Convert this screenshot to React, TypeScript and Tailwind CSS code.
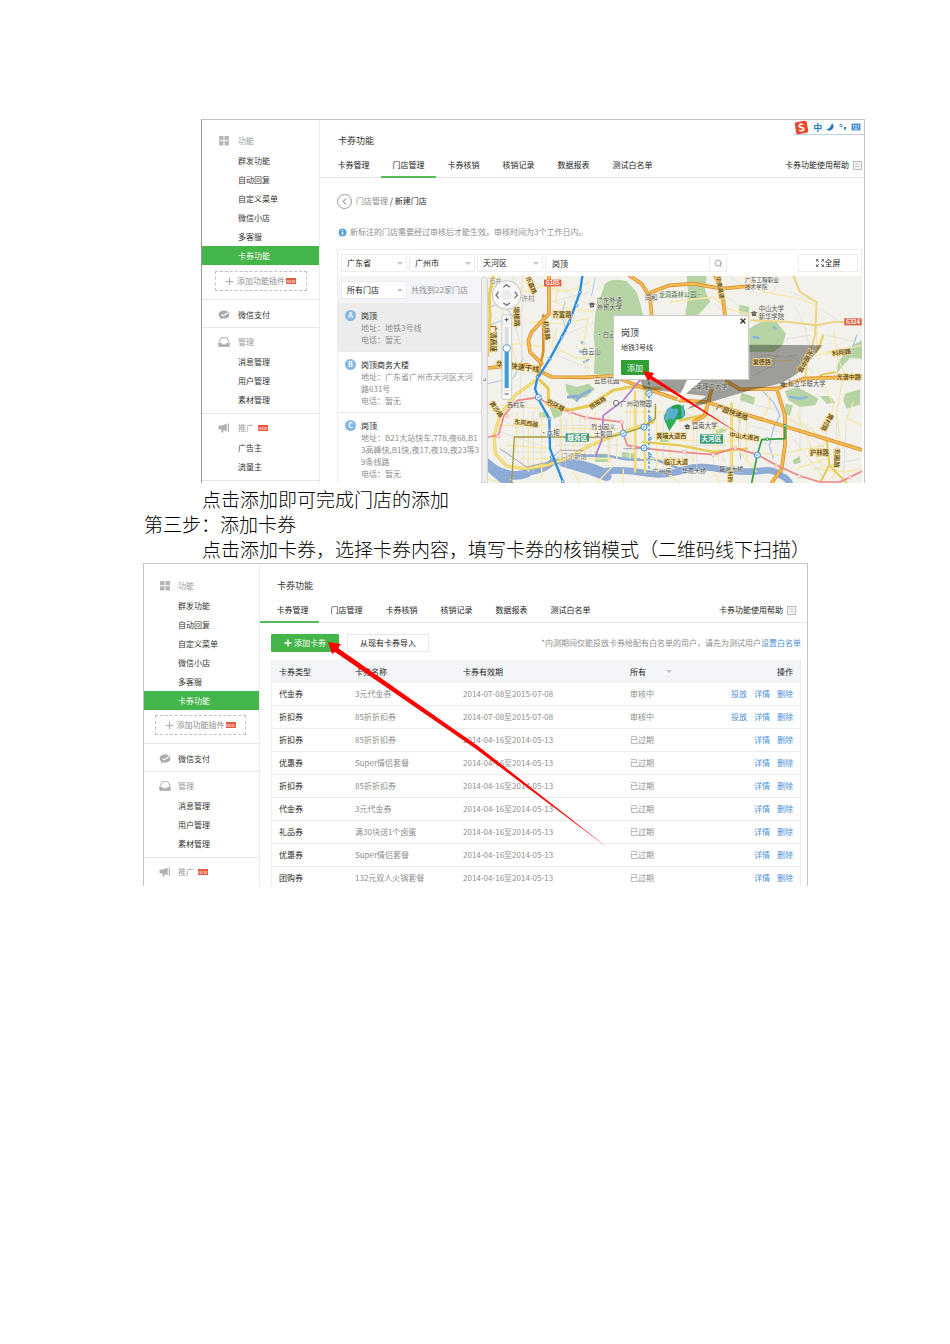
import React from 'react';
import { ChevronLeft, Info, Search, X } from 'lucide-react';

interface Store {
  mark: string;
  name: string;
  lines: string[];
}

interface Coupon {
  type: string;
  name: string;
  period: string;
  status: string;
  canRelease?: boolean;
}

interface MapLabel {
  text: string;
  x: number;
  y: number;
  size?: number;
  rotate?: number;
  color?: string;
  road?: boolean;
}

const tabs = ['卡券管理', '门店管理', '卡券核销', '核销记录', '数据报表', '测试白名单'];

const featureItems = ['群发功能', '自动回复', '自定义菜单', '微信小店', '多客服', '卡券功能'];

const stores: Store[] = [
  { mark: 'A', name: '岗顶', lines: ['地址：地铁3号线', '电话：暂无'] },
  { mark: 'B', name: '岗顶商务大楼', lines: ['地址：广东省广州市天河区天河', '路631号', '电话：暂无'] },
  {
    mark: 'C',
    name: '岗顶',
    lines: ['地址：B21大站快车,778,夜68,B1', '3高峰快,B1快,夜17,夜19,夜23等3', '9条线路', '电话：暂无'],
  },
];

const coupons: Coupon[] = [
  { type: '代金券', name: '3元代金券', period: '2014-07-08至2015-07-08', status: '审核中', canRelease: true },
  { type: '折扣券', name: '85折折扣券', period: '2014-07-08至2015-07-08', status: '审核中', canRelease: true },
  { type: '折扣券', name: '85折折扣券', period: '2014-04-16至2014-05-13', status: '已过期' },
  { type: '优惠券', name: 'Super情侣套餐', period: '2014-04-16至2014-05-13', status: '已过期' },
  { type: '折扣券', name: '85折折扣券', period: '2014-04-16至2014-05-13', status: '已过期' },
  { type: '代金券', name: '3元代金券', period: '2014-04-16至2014-05-13', status: '已过期' },
  { type: '礼品券', name: '满30块送1个卤蛋', period: '2014-04-16至2014-05-13', status: '已过期' },
  { type: '优惠券', name: 'Super情侣套餐', period: '2014-04-16至2014-05-13', status: '已过期' },
  { type: '团购券', name: '132元双人火锅套餐', period: '2014-04-16至2014-05-13', status: '已过期' },
];

const mapLabels: MapLabel[] = [
  { text: '石井', x: 46, y: 32, size: 18, color: '#888' },
  { text: '乐嘉路', x: 148, y: 42, size: 18, rotate: 68, road: true },
  { text: '许村', x: 144, y: 86, size: 20, color: '#888' },
  { text: '增槎路', x: 103, y: 134, size: 20, rotate: 88, road: true },
  { text: '广清高速', x: 34, y: 200, size: 20, rotate: 90, road: true },
  { text: '齐富路', x: 246, y: 136, size: 19, road: true },
  { text: '机场路', x: 193, y: 176, size: 19, rotate: 84, road: true },
  { text: '广东外语', x: 388, y: 92, size: 19 },
  { text: '外贸大学', x: 388, y: 114, size: 19 },
  { text: '•白云', x: 378, y: 194, size: 19 },
  { text: '白云山', x: 334, y: 246, size: 19 },
  { text: '同和', x: 514, y: 84, size: 19 },
  { text: '龙洞森林公园•', x: 602, y: 76, size: 19, color: '#4b7547' },
  { text: '广东工程职业', x: 846, y: 30, size: 17 },
  { text: '技术学院', x: 828, y: 50, size: 17 },
  { text: '中山大学', x: 874, y: 118, size: 19 },
  { text: '新华学院', x: 874, y: 140, size: 19 },
  { text: '华南高速', x: 714, y: 48, size: 17, rotate: 80, road: true },
  { text: '华南快速干线', x: 112, y: 292, size: 22, rotate: 8, road: true },
  { text: '云台花园', x: 380, y: 334, size: 19 },
  { text: '西村东', x: 108, y: 404, size: 18 },
  { text: '内环路', x: 224, y: 406, size: 19, rotate: 28, road: true },
  { text: '恒福路', x: 356, y: 398, size: 18, rotate: -32, road: true },
  { text: '广州动物园', x: 468, y: 402, size: 19 },
  { text: '东风西路', x: 138, y: 460, size: 18, rotate: 8, road: true },
  { text: '黄沙路', x: 44, y: 416, size: 18, rotate: 55, road: true },
  { text: '•六榕', x: 210, y: 490, size: 19 },
  { text: '烈士起义', x: 370, y: 470, size: 18 },
  { text: '士陵园', x: 370, y: 492, size: 18 },
  { text: '门诊新馆', x: 282, y: 560, size: 19, color: '#888' },
  { text: '黄埔大道西', x: 574, y: 498, size: 18, road: true },
  { text: '临江大道', x: 588, y: 576, size: 18, road: true },
  { text: '•广州塔', x: 536, y: 606, size: 19 },
  { text: '华南理工大学', x: 686, y: 352, size: 19 },
  { text: '暨南大学', x: 674, y: 469, size: 19 },
  { text: '广园快速路', x: 754, y: 428, size: 20, rotate: 20, road: true },
  { text: '中山大道西', x: 792, y: 500, size: 18, rotate: 8, road: true },
  { text: '华南大桥', x: 642, y: 602, size: 18 },
  { text: '琶洲大桥', x: 753, y: 597, size: 18 },
  { text: '科韵', x: 745, y: 614, size: 16, rotate: 88, road: true },
  { text: '棠德路', x: 845, y: 275, size: 18, road: true },
  { text: '大观中路', x: 970, y: 264, size: 19, rotate: 118, road: true },
  { text: '科翔路', x: 1086, y: 248, size: 19, rotate: -8, road: true },
  { text: '光谱中路', x: 1106, y: 320, size: 18, road: true },
  { text: '私立华联大学', x: 980, y: 341, size: 19 },
  { text: '黄村路', x: 1036, y: 448, size: 19, rotate: 118, road: true },
  { text: '护林路', x: 1018, y: 548, size: 19, road: true },
  { text: '东圃路', x: 1064, y: 558, size: 19, rotate: 92, road: true },
];

const GridIcon = () => (
  <svg viewBox="0 0 10 10" className="w-[10px] h-[10px]" fill="#b5b5b5">
    <rect x="0" y="0" width="4.5" height="4.2" />
    <rect x="5.5" y="0" width="4.5" height="4.2" />
    <rect x="0" y="5.2" width="4.5" height="4.2" />
    <rect x="5.5" y="5.2" width="4.5" height="4.2" />
  </svg>
);

const PayIcon = () => (
  <svg viewBox="0 0 12 10" className="w-3 h-[10px]">
    <path d="M6 .5C9 .5 11.4 2.2 11.4 4.5S9 8.600 6 8.600c-.7 0-1.300-.1-1.900-.25L2 9.500l.4-1.900C1.200 6.900.6 5.800.6 4.500.6 2.200 3 .5 6 .5z" fill="#a9a9a9" />
    <path d="M3.200 4.300l1.800 1.500 5.200-3" fill="none" stroke="#fff" strokeWidth="1.100" />
  </svg>
);

const TrayIcon = () => (
  <svg viewBox="0 0 12 10" className="w-3 h-[10px]">
    <path d="M3 .7h6l2.200 5.300v3.300H.8V6z" fill="#fff" stroke="#b0b0b0" strokeWidth="1" />
    <path d="M.8 6h2.700l.8 1.300h3.400L8.500 6h2.700v3.300H.8z" fill="#b0b0b0" />
  </svg>
);

const HornIcon = () => (
  <svg viewBox="0 0 12 10" className="w-3 h-[10px]" fill="#b0b0b0">
    <path d="M.5 3.200Q.5 2.500 1.500 2.500H4L8.700.8v7.400L5.500 7v2.500H3.500V6.500h-2Q.5 6.500.5 5.500z" />
    <path d="M9.800.5h1.200v8.500H9.800z" />
  </svg>
);

const NewBadge = () => (
  <span className="flex h-[6px] w-[10px] items-center justify-center bg-[#e8583c] text-[4px] leading-none text-white">NEW</span>
);

const Caret = () => <span className="border-x-[3px] border-t-[3px] border-x-transparent border-t-[#c4c4c4]" />;

interface SidebarProps {
  compact?: boolean;
}

const Sidebar: React.FC<SidebarProps> = ({ compact }) => {
  const headClass = `flex h-5 items-center text-[#999] ${compact ? 'gap-[7px] pl-[15px]' : 'gap-2 pl-4'}`;
  const itemClass = `flex h-[19px] items-center ${compact ? 'pl-[34px]' : 'pl-9'}`;

  return (
    <nav
      className={`shrink-0 border-r border-[#ebebeb] text-[#333] ${compact ? 'w-[116px] pt-3' : 'w-[118px] pt-[11px]'}`}
    >
      <div className={headClass}>
        <span className="flex w-3 justify-center">
          <GridIcon />
        </span>
        功能
      </div>
      {featureItems.map((item) => (
        <a
          key={item}
          href="#"
          className={`${itemClass} ${item === '卡券功能' ? 'bg-[#44b549] text-white' : ''}`}
        >
          {item}
        </a>
      ))}
      <button
        className={`flex h-5 items-center justify-center gap-1 border border-dashed border-[#c0c0c0] text-[#8d8d8d] ${
          compact ? 'mt-[5px] mb-2 ml-[11px] w-[91px]' : 'mt-[6px] mb-2 ml-[13px] w-[92px]'
        }`}
      >
        <svg viewBox="0 0 7 7" className="h-[7px] w-[7px]" stroke="#aaa">
          <path d="M3.500 0v7M0 3.500h7" />
        </svg>
        <span className="flex items-center gap-px">
          添加功能插件
          <NewBadge />
        </span>
      </button>

      <div className="border-t border-[#e7e7eb] pt-[5px] pb-[2px]">
        <a href="#" className={`${headClass} text-[#333]!`}>
          <PayIcon />
          微信支付
        </a>
      </div>
      <div className="border-t border-[#e7e7eb] py-1">
        <div className={headClass}>
          <TrayIcon />
          管理
        </div>
        {['消息管理', '用户管理', '素材管理'].map((item) => (
          <a key={item} href="#" className={itemClass}>
            {item}
          </a>
        ))}
      </div>
      <div className="border-t border-[#e7e7eb] py-1">
        <div className={headClass}>
          <HornIcon />
          <span className="flex items-center gap-1">
            推广
            <NewBadge />
          </span>
        </div>
        {!compact &&
          ['广告主', '流量主'].map((item) => (
            <a key={item} href="#" className={itemClass}>
              {item}
            </a>
          ))}
      </div>
      {!compact && <div className="border-t border-[#e7e7eb]" />}
    </nav>
  );
};

interface HeaderProps {
  active: string;
  compact?: boolean;
}

const Header: React.FC<HeaderProps> = ({ active, compact }) => (
  <header className={compact ? 'pt-[15px]' : 'pt-[14px]'}>
    <h1 className={`text-[9px] leading-[14px] text-[#333] ${compact ? 'pl-[17px]' : 'pl-[18px]'}`}>卡券功能</h1>
    <div className={`flex h-[30px] items-end border-b border-[#e7e7eb] ${compact ? 'pr-[11px]' : 'pl-[6px] pr-[2px]'}`}>
      {tabs.map((tab, i) => (
        <a
          key={tab}
          href="#"
          className={`-mb-px flex h-[25px] shrink-0 justify-center border-b-2 text-[#222] ${
            tab === active ? 'border-[#56b95a]' : 'border-transparent'
          } ${compact && i === 0 ? 'w-[59px] pl-[6px]' : i === 5 ? 'w-[63px]' : 'w-[55px]'}`}
        >
          <span className="pt-[6px] leading-3">{tab}</span>
        </a>
      ))}
      <a href="#" className="mb-[6px] ml-auto flex items-center gap-1 leading-3 text-[#222]">
        卡券功能使用帮助
        <svg viewBox="0 0 9 9" className="h-[9px] w-[9px]" fill="#f4f4f4" stroke="#bbb">
          <rect x=".5" y=".5" width="8" height="8" />
          <path d="M2.500 3h4M2.500 5.500h4" strokeWidth=".8" />
        </svg>
      </a>
    </div>
  </header>
);

interface FilterSelectProps {
  label: string;
  value: string;
}

const FilterSelect: React.FC<FilterSelectProps> = ({ label, value }) => (
  <div className="relative w-[66px] shrink-0">
    <select
      aria-label={label}
      className="block h-[18px] w-full appearance-none border border-[#ececf0] bg-white pl-[5px] text-[8px] text-[#222]"
    >
      <option>{value}</option>
    </select>
    <span className="pointer-events-none absolute right-1 top-2 flex">
      <Caret />
    </span>
  </div>
);

const roadLabelColor = '#5a4310';

/* City map: parks, water, roads, metro lines, then labels and controls */
const CityMap = () => (
  <svg viewBox="24 12 1122 621" preserveAspectRatio="xMinYMin slice" className="absolute inset-0 h-full w-full">
    <rect x="0" y="0" width="1600" height="900" fill="#f3f1ec" />

    <g fill="#b6d4a3">
      <path d="M375 35Q400 15 440 28L470 60 485 110 492 140V300L440 322 342 305 345 230 341 190 346 120Z" />
      <path d="M620 12H680L675 55 690 90 655 128 615 135 625 70Z" />
      <path d="M808 170Q850 138 890 150L918 185 908 218 880 240H808Z" />
      <path d="M778 98L808 105 806 128 778 124Z" />
      <path d="M1110 225L1146 205V260L1110 258 1085 285 1070 305 1074 270Z" />
      <path d="M915 358L950 345 985 362 1016 380 1005 400 960 405 925 385Z" />
      <path d="M1020 372L1050 372 1065 392 1040 395Z" />
      <path d="M1095 365L1140 352V398L1100 410 1090 385Z" />
      <path d="M915 395L938 400 930 432 915 425Z" />
      <path d="M938 565L960 552 962 572 942 577Z" />
      <path d="M256 335L290 345 325 335 345 350 320 375 280 385 260 360Z" />
      <path d="M208 405L245 402 246 430 222 440Z" />
      <path d="M784 362L825 376 822 398 780 385Z" />
      <path d="M705 478L730 465 742 475 712 488Z" />
      <path d="M345 545H385V570H345Z" />
      <path d="M178 420H205V436H178Z" />
      <path d="M425 540L470 545 465 560H425Z" />
      <path d="M540 480H565V510H540Z" />
    </g>

    <g fill="none" stroke="#8dabd6" strokeLinecap="round" strokeLinejoin="round">
      <path d="M20 572Q48 600 80 606 110 615 140 604" strokeWidth="26" />
      <path d="M30 588L90 640" strokeWidth="26" />
      <path d="M140 602Q185 595 205 580 220 565 240 567 300 566 370 598 430 590 500 604 550 612 600 598 640 580 700 588 780 604 850 596 880 590 905 612 925 620 930 636" strokeWidth="20" />
      <path d="M250 570L320 590 380 612" strokeWidth="30" />
      <path d="M280 552Q330 550 390 552 440 568 520 560L600 590" strokeWidth="8" />
      <path d="M30 105Q60 90 80 108L110 150M24 160L90 138 120 110M24 335L100 318 130 260" strokeWidth="3" stroke="#a8c5e6" />
      <path d="M850 358L880 390 900 430 880 470 868 520 880 560M780 440L775 490 782 560M1130 190L1110 250" strokeWidth="4" stroke="#a8c5e6" />
      <path d="M265 375L300 372 330 355M290 385L300 372" strokeWidth="9" />
      <path d="M930 375L960 380 980 375M820 195L835 198M880 165L888 170M305 210L310 215M300 238L320 243M312 270L325 263" strokeWidth="7" stroke="#86b4de" />
      <path d="M255 90L245 130 260 180M345 20L335 70" strokeWidth="3" stroke="#a8c5e6" />
    </g>

    <g fill="none" stroke="#dcdad6" strokeWidth="2">
      <path d="M100 12L105 160 125 230 120 380M126 12V280M60 440L110 470 180 440M60 480L180 520M60 540H200M130 400V590M160 420V600M240 430V600M260 440L255 600M300 420V550M330 440V550M390 460V570M225 460H330M225 520H420M440 400V560M470 400V590M550 420V590M230 250L330 290M210 90L330 60M240 40L340 110M250 190L345 150" />
      <path d="M700 90Q760 150 810 190M720 60L790 110M750 15L840 70M900 20L880 60M930 60L1010 90M940 100Q970 130 990 230M860 350Q900 330 950 360M1020 110L1080 150M1040 190L1130 210M920 200L990 190M930 250L1000 300M830 400L910 420M800 460L900 480M820 520L900 510M930 440L1000 470M960 400V540M980 490L1050 540M1070 400V600M1100 430L1090 620M1000 590L1140 560M940 500L1040 630M600 430H700M600 520H740M620 410V570M650 430V590M700 400V570M730 430V570" />
      <path d="M815 290Q835 240 870 250T950 250M820 310L880 280 900 220" stroke="#cccac7" />
    </g>

    <g fill="none" stroke="#f5e8a8" strokeWidth="4" strokeLinejoin="round">
      <path d="M24 50L90 30 140 60 190 40 260 60 330 30M60 12L65 110 90 190 110 280M24 225L120 215 190 225M240 12L225 90 270 110 340 120M230 170L215 220 290 260 340 255M150 150L250 155 320 140M325 130L310 220 320 300" />
      <path d="M60 400L180 410M50 460H200M110 420V530M80 520L220 530M145 440V600M185 420V620M225 470H420M245 440V570M275 430L285 560M315 430V550M345 420V560M385 430V580M410 480V560M430 420H560M450 400V560M530 400V600M570 500V620M480 560H600M120 560H400" />
      <path d="M430 590V633M400 580L350 633M280 600L300 633M560 600L600 633M700 600L720 633M820 600V633M24 620L60 633" />
      <path d="M570 90L700 75 740 110 850 135M790 12L850 60 960 80 1010 100M810 145L925 150 1010 160 1060 150 1146 150M1010 160V230M940 12L960 60 1010 90 1005 190 980 280 975 340M1040 240L1146 220M1060 180L1075 260 1095 310M1000 250L1065 240M810 270L940 265M860 350L870 400 840 450M775 400L780 540 830 600M800 420V560M840 440L900 460M800 500L910 500M820 540L910 550M920 440L1040 500 1120 520M930 540L1030 520 1060 400 1020 310M950 420L1000 540 1040 600M1090 310L1070 420 1080 500 1060 620M1120 390L1100 440 1146 460M1000 590L1100 600 1146 590M950 590L1040 560M620 440H720M600 470H760M600 505H770M640 410V570M700 440V560M715 430V560" />
    </g>
    <path d="M940 12L960 60 1010 90 1005 190 980 280 975 340M810 145L925 150 1010 160 1060 150 1146 150" fill="none" stroke="#ecd584" strokeWidth="6" strokeLinejoin="round" />

    <g fill="none" strokeLinejoin="round" strokeLinecap="round">
      <g stroke="#e6cb55" strokeWidth="9">
        <path d="M40 12L28 70 30 130 24 250" />
        <path d="M168 325L105 370 60 430 42 490 46 545 80 582 140 590 200 580 260 560 330 520 430 480 520 450" />
        <path d="M180 325L205 350V400L270 414 325 402 400 355 450 345 540 350" />
        <path d="M465 360V600M495 345V600M490 510L600 520 700 540 800 530" strokeWidth="7" />
        <path d="M755 395V640M690 380L670 430 600 445" strokeWidth="8" />
        <path d="M1020 310L1065 300M1030 190L1010 240" strokeWidth="6" />
        <path d="M1048 580L1020 633M1048 580L1100 633M1040 500L1048 580" strokeWidth="6" />
      </g>
      <g stroke="#f9e386" strokeWidth="5">
        <path d="M168 325L105 370 60 430 42 490 46 545 80 582 140 590 200 580 260 560 330 520 430 480 520 450" />
        <path d="M465 360V600M495 345V600M755 395V640" strokeWidth="4" />
      </g>
      <g stroke="#da902b" strokeWidth="11">
        <path d="M207 12V125L155 180 145 205 150 240 185 275" />
        <path d="M190 130V240L172 318" strokeWidth="8" />
        <path d="M24 288L60 284 140 278 215 315 310 316 400 312 470 340 600 385 680 390 800 428 970 480 1146 534" />
        <path d="M450 12L485 35 510 75 515 130M515 60L570 40 640 35 725 50 810 42M705 12L725 50 735 130" />
        <path d="M740 328L780 352 890 350 970 320 1146 314M890 350L915 430V520L905 590 870 640M695 350L675 430 640 450" />
      </g>
      <g stroke="#f7bd55" strokeWidth="6">
        <path d="M207 12V125L155 180 145 205 150 240 185 275" />
        <path d="M24 288L60 284 140 278 215 315 310 316 400 312 470 340 600 385 680 390 800 428 970 480 1146 534" />
        <path d="M450 12L485 35 510 75 515 130M515 60L570 40 640 35 725 50 810 42M705 12L725 50 735 130" />
        <path d="M740 328L780 352 890 350 970 320 1146 314M890 350L915 430V520L905 590 870 640M695 350L675 430 640 450" />
      </g>
    </g>

    <g fill="none" strokeWidth="5" strokeLinejoin="round">
      <path d="M24 495L55 490 72 430 112 385 175 376 210 400 320 437 425 450 431 490 442 520 500 530 600 540 700 548 765 528 832 548 890 580 960 612 1020 630H1080L1146 598" stroke="#f08585" />
      <path d="M95 633L103 495H280L380 497 430 485 490 465 526 440V395" stroke="#a8993c" strokeWidth="4" />
      <path d="M345 555L365 505 370 430 430 385 480 325" stroke="#b178d2" />
      <path d="M60 530L140 585 205 570 240 535 310 535M430 530L490 530" stroke="#a5a5a5" strokeWidth="3" />
      <path d="M307 12L300 60 268 150 245 195 210 260 172 320 165 350 180 390 208 440 210 530 250 633" stroke="#2a8ce0" strokeWidth="7" />
      <path d="M507 330V600" stroke="#5aa5e2" strokeWidth="5" strokeDasharray="8 6" />
      <path d="M815 633L832 548 845 503 915 500V460" stroke="#2f9f4b" />
    </g>
    <g fill="#fff" stroke="#2a8ce0" strokeWidth="3">
      {[[300, 60], [290, 100], [268, 150], [245, 195], [210, 260], [172, 315], [208, 440], [208, 485], [215, 555], [248, 628], [510, 440], [510, 500], [510, 550]].map(([cx, cy]) => (
        <circle key={`${cx}-${cy}`} cx={cx} cy={cy} r="4" />
      ))}
      {[[175, 376], [430, 484], [492, 465], [492, 528], [507, 364], [832, 549]].map(([cx, cy]) => (
        <g key={`${cx}-${cy}`}>
          <circle cx={cx} cy={cy} r="9" />
          <path d={`M${cx - 4} ${cy + 3}l8-6`} />
        </g>
      ))}
    </g>
    <g fill="#fff" stroke="#f08585" strokeWidth="2">
      {[[55, 493], [82, 432], [270, 421], [320, 437], [425, 450], [460, 526], [613, 540], [700, 548], [766, 528], [888, 581], [958, 612], [1110, 616]].map(([cx, cy]) => (
        <circle key={`${cx}-${cy}`} cx={cx} cy={cy} r="5" />
      ))}
    </g>
    <g fill="#fff" stroke="#2f9f4b" strokeWidth="3">
      <circle cx="862" cy="501" r="4" />
      <circle cx="915" cy="461" r="4" />
    </g>

    <path d="M808 218L1028 220 970 288Q930 328 880 340L810 355 620 412 680 372 490 350 480 322H808Z" fill="#000" fillOpacity=".35" />

    {mapLabels.map(({ text, x, y, size = 19, rotate = 0, color, road }) => (
      <text
        key={`${text}-${x}`}
        x={x}
        y={y}
        fontSize={size}
        textAnchor="middle"
        transform={rotate ? `rotate(${rotate} ${x} ${y})` : undefined}
        fill={color ?? (road ? roadLabelColor : '#555')}
        stroke={road ? '#f4dc90' : '#f6f5f0'}
        strokeWidth={road ? 5 : 3}
        strokeOpacity={road ? '.8' : '.5'}
        paintOrder="stroke"
        fontWeight={road ? 500 : 400}
      >
        {text}
      </text>
    ))}
    {[[336, 96], [822, 122], [910, 335], [616, 347], [622, 462]].map(([x, y]) => (
      <path key={x} d={`M${x - 11} ${y}l11-5 11 5-11 5zm5 3v7h12v-7`} fill="#666" />
    ))}
    <circle cx="408" cy="393" r="8" fill="none" stroke="#777" strokeWidth="3" />

    <rect x="192" y="23" width="52" height="20" fill="#e65a3e" />
    <text x="218" y="39" fontSize="17" fontWeight="700" textAnchor="middle" fill="#fff">G105</text>
    <rect x="1093" y="139" width="52" height="21" fill="#e65a3e" />
    <text x="1119" y="156" fontSize="17" fontWeight="700" textAnchor="middle" fill="#fff">G324</text>
    <rect x="257" y="484" width="70" height="25" fill="#3a9b78" />
    <text x="292" y="504" fontSize="20" fontWeight="700" textAnchor="middle" fill="#fff">越秀区</text>
    <rect x="660" y="487" width="69" height="28" fill="#3a9b78" />
    <text x="694" y="508" fontSize="20" fontWeight="700" textAnchor="middle" fill="#fff">天河区</text>

    {/* result pins */}
    <path d="M568 478C562 460 552 450 552 434Q554 418 570 418T590 434C590 452 576 462 568 478Z" fill="#2fae54" />
    <path d="M562 415Q575 396 600 398 620 408 614 432 600 448 575 440Z" fill="#24a04e" />
    <path d="M560 412l12-8 10 8 8-4 6 10-8 18-8 8-10-6-8 10-8-8z" fill="#57aecd" />
    <path d="M604 402l8-4v38l-8 2z" fill="#57aecd" />

    {/* pan and zoom control */}
    <circle cx="80" cy="69" r="43" fill="#f8f8f8" stroke="#a8a8a8" strokeWidth="2" />
    <circle cx="80" cy="69" r="16" fill="#ececec" />
    <path d="M70 46l10-8 10 8M70 92l10 8 10-8M56 59l-8 10 8 10M104 59l8 10-8 10" fill="none" stroke="#777" strokeWidth="4" />
    <rect x="66" y="129" width="29" height="253" rx="4" fill="#fbfbfb" stroke="#b5b5b5" strokeWidth="2" />
    <path d="M66 156H95M66 355H95" stroke="#d5d5d5" strokeWidth="2" />
    <path d="M74 143h12M80 137v12M74 366h12" stroke="#555" strokeWidth="3" />
    <rect x="74" y="164" width="12" height="184" fill="#d9dde0" />
    <rect x="74" y="236" width="12" height="112" fill="#3a9fdc" />
    <circle cx="80" cy="229" r="11" fill="#fff" stroke="#5f9fd0" strokeWidth="3" />

    <path d="M624 318H672L590 389Z" fill="#fff" />
  </svg>
);

const ImeBar = () => (
  <div className="absolute top-0 right-0 flex h-[15px] w-[70px] items-center justify-between border-b border-[#b9d2ea] bg-white pr-[3px]">
    <svg viewBox="0 0 16 16" className="h-[15px] w-[15px]">
      <rect x="1.500" y="1.500" width="13" height="13" rx="2" fill="#e9492f" transform="rotate(-10 8 8)" />
      <text x="8" y="12" fontSize="11" fontWeight="700" textAnchor="middle" fill="#fff" transform="rotate(-8 8 8)">S</text>
    </svg>
    <span className="text-[9px] leading-[13px] font-bold text-[#2878c0]">中</span>
    <svg viewBox="0 0 8 8" className="h-2 w-2">
      <path d="M6 0Q9 3 6.500 6T.3 6.500Q4.500 5.500 6 0z" fill="#2878c0" />
    </svg>
    <svg viewBox="0 0 8 8" className="h-2 w-2">
      <circle cx="2" cy="2.500" r="1.200" fill="none" stroke="#2878c0" strokeWidth=".8" />
      <path d="M5 4h2v2L5.500 7.500z" fill="#2878c0" />
    </svg>
    <svg viewBox="0 0 10 8" className="h-2 w-[10px]">
      <rect x=".5" y=".5" width="9" height="7" rx="1" fill="#4b94d0" />
      <path d="M2 2.500h6M2 4h6" stroke="#fff" strokeWidth=".8" strokeDasharray="1 .7" />
      <path d="M3 6h4" stroke="#fff" strokeWidth=".8" />
    </svg>
  </div>
);

const StorePanel = () => (
  <section className="relative ml-[58px] flex overflow-hidden border-t border-r border-l border-[#c4c4c4] border-l-[#999] bg-white">
    <Sidebar />
    <div className="flex min-w-0 flex-1 flex-col">
      <Header active="门店管理" />
      <ImeBar />
      <div className="flex flex-1 flex-col pl-[17px]">
        <div className="mt-[15px] flex h-4 items-center gap-1 text-[#222]">
          <button aria-label="返回" className="flex h-[15px] w-[15px] items-center justify-center rounded-full border border-[#999]">
            <ChevronLeft className="h-[11px] w-[11px] text-[#666]" />
          </button>
          <span>
            <a href="#" className="text-[#8d8d8d]">门店管理</a> / 新建门店
          </span>
        </div>
        <p className="mt-[15px] flex h-4 items-center gap-[2px] text-[#8d8d8d]">
          <Info className="h-[11px] w-[11px] fill-[#55a3d8] text-white" strokeWidth={3} />
          新标注的门店需要经过审核后才能生效。审核时间为3个工作日内。
        </p>
        <form className="mt-[9px] mr-[2px] flex h-[27px] items-center border border-b-0 border-[#ececf0] pr-[3px] pl-[3px]">
          <div className="flex gap-[2px]">
            <FilterSelect label="省份" value="广东省" />
            <FilterSelect label="城市" value="广州市" />
            <FilterSelect label="区域" value="天河区" />
          </div>
          <input
            aria-label="门店名称"
            defaultValue="岗顶"
            className="ml-[2px] h-[18px] min-w-0 w-[165px] border border-[#ececf0] pl-[6px] text-[8px] text-[#222]"
          />
          <button type="button" aria-label="搜索" className="flex h-[18px] w-[17px] items-center justify-center border border-l-0 border-[#ececf0]">
            <Search className="h-[9px] w-[9px] text-[#888]" />
          </button>
          <button type="button" className="ml-auto flex h-[18px] w-[60px] items-center justify-center gap-[1px] border border-[#ececf0] text-[#222]">
            <svg viewBox="0 0 8 8" className="h-2 w-2" fill="none" stroke="#666" strokeWidth=".9">
              <path d="M.5 2.500v-2h2M.5.5l2.500 2.500M5.500.5h2v2M7.500.5L5 3M.5 5.500v2h2M.5 7.500L3 5M5.500 7.500h2v-2M7.500 7.500L5 5" />
            </svg>
            全屏
          </button>
        </form>
        <div className="mr-[2px] flex flex-1">
          <div className="w-[144px] shrink-0 border-l border-[#ececf0]">
            <div className="flex h-[27px] items-center gap-1 bg-[#f4f5f9] pl-[3px] text-[#8d8d8d]">
              <FilterSelect label="门店范围" value="所有门店" />
              共找到22家门店
            </div>
            <ul>
              {stores.map((store) => (
                <li
                  key={store.mark}
                  className={`flex gap-[5px] border-b border-[#e7e7eb] pt-[6px] pl-[7px] last:border-b-0 ${
                    store.mark === 'A' ? 'bg-[#ececec]' : ''
                  } ${store.mark === 'C' ? 'pb-[3px]' : 'pb-[5px]'}`}
                >
                  <span className="mt-[1px] flex h-[11px] w-[11px] items-center justify-center rounded-full bg-[#84b8e3] text-[7px] leading-none font-bold text-white">
                    {store.mark}
                  </span>
                  <div className="text-[#8d8d8d]">
                    <h2 className="leading-[13px] text-[#222]">{store.name}</h2>
                    {store.lines.map((line) => (
                      <p key={line} className="leading-3 whitespace-nowrap">{line}</p>
                    ))}
                  </div>
                </li>
              ))}
            </ul>
          </div>
          <div className="flex w-[7px] shrink-0 items-center justify-center rounded-t-sm border border-[#d4d4d4] bg-[#eee]">
            <span className="h-[3px] w-[3px] border-r border-b border-[#999]" />
          </div>
          <div className="relative min-w-0 flex-1 overflow-hidden">
            <CityMap />
            <div className="absolute top-[39px] left-[125px] w-[136px] border border-[#c9c9c9] bg-white px-[7px] pt-[10px] pb-1 text-[#333]">
              <button aria-label="关闭" className="absolute top-[1px] right-[1px]">
                <X className="h-2 w-2" strokeWidth={4} />
              </button>
              <h3 className="text-[9px] leading-[13px]">岗顶</h3>
              <p className="mt-[3px] text-[7px] leading-[10px]">地铁3号线</p>
              <button className="mt-2 flex h-[15px] w-7 items-center justify-center rounded-[1px] bg-[#2f9e33] text-white">添加</button>
            </div>
            <svg viewBox="0 0 98 64" className="pointer-events-none absolute top-[95px] left-[155px] h-16 w-[98px]" fill="#f00">
              <path d="M0 0L11 2 9 5 98 64 7 8 5 10Z" />
            </svg>
          </div>
        </div>
      </div>
    </div>
  </section>
);

const CouponPanel = () => (
  <section className="relative mr-[57px] flex overflow-hidden border-t border-r border-l border-[#c4c4c4] bg-white">
    <Sidebar compact />
    <div className="min-w-0 flex-1">
      <Header active="卡券管理" compact />
      <div className="pr-[6px] pl-[11px]">
        <div className="mt-[11px] flex items-center">
          <button className="flex h-[18px] w-[68px] items-center justify-center gap-[2px] rounded-[1px] bg-[#44b549] text-white">
            <svg viewBox="0 0 8 8" className="h-2 w-2" stroke="#fff" strokeWidth="1.400">
              <path d="M4 .5v7M.5 4h7" />
            </svg>
            添加卡券
          </button>
          <button className="ml-2 h-[18px] w-[82px] border border-[#e7e7eb] text-[#222]">从现有卡券导入</button>
          <p className="ml-auto whitespace-nowrap text-[#8d8d8d]">
            *内测期间仅能投放卡券给配有白名单的用户，请先为测试用户
            <a href="#" className="text-[#4a90d9]">设置白名单</a>
          </p>
        </div>
        <table className="-mb-1 mt-2 w-full table-fixed border-separate border-spacing-0 border-x border-[#ececf0] text-left">
          <thead>
            <tr className="h-[23px] bg-[#f4f5f9] text-[#222]">
              <th className="w-[76px] pl-[7px] font-normal">卡券类型</th>
              <th className="w-[108px] pl-[7px] font-normal">卡券名称</th>
              <th className="w-[167px] pl-[7px] font-normal">卡券有效期</th>
              <th className="w-[80px] pl-[7px] font-normal">
                <button className="flex items-center gap-5">
                  所有
                  <Caret />
                </button>
              </th>
              <th className="pr-[7px] text-right font-normal">操作</th>
            </tr>
          </thead>
          <tbody>
            {coupons.map((coupon, i) => (
              <tr key={i} className="h-[23px] text-[#8d8d8d] *:border-b *:border-[#ececf0]">
                <td className="pl-[7px] text-[#222]">{coupon.type}</td>
                <td className="pl-[7px]">{coupon.name}</td>
                <td className="pl-[7px]">{coupon.period}</td>
                <td className="pl-[7px]">{coupon.status}</td>
                <td className="pr-[7px]">
                  <div className="flex justify-end gap-[7px] text-[#4a90d9]">
                    {coupon.canRelease && <a href="#">投放</a>}
                    <a href="#">详情</a>
                    <a href="#">删除</a>
                  </div>
                </td>
              </tr>
            ))}
          </tbody>
        </table>
      </div>
    </div>
    <svg viewBox="0 0 280 206" className="pointer-events-none absolute top-[78px] left-[184px] h-[206px] w-[280px]" fill="#f00">
      <path d="M0 0L13 2 10 6 150 104 280 206 148 107 7 10 4 12Z" />
    </svg>
  </section>
);

const App: React.FC = () => {
  return (
    <main className="min-h-screen bg-white pt-[119px] pr-[85px] pl-[143px] font-['Noto_Sans_CJK_SC',sans-serif] text-[8px] leading-3">
      <StorePanel />
      <div className="pt-[3px] pb-[2px] pl-px text-[19px] leading-[25px] font-light text-black">
        <p className="pl-[58px]">点击添加即可完成门店的添加</p>
        <p>第三步：添加卡券</p>
        <p className="pl-[58px] whitespace-nowrap">点击添加卡券，选择卡券内容，填写卡券的核销模式（二维码线下扫描）</p>
      </div>
      <CouponPanel />
    </main>
  );
};

export default App;
